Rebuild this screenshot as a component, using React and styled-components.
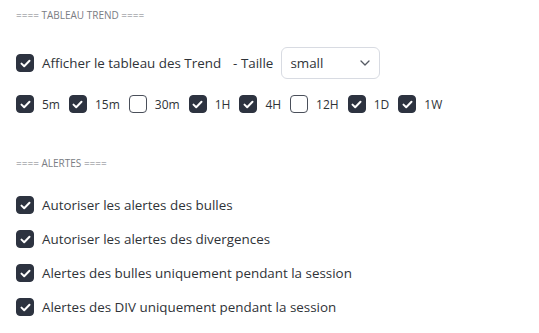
import React from 'react'
import styled, { createGlobalStyle } from 'styled-components'

const Global = createGlobalStyle`
  body {
    margin: 0;
    background: #ffffff;
    font-family: "Open Sans", "Liberation Sans", Arial, sans-serif;
    color: #2f3338;
  }
`

const Page = styled.div`
  padding: 9px 16px;
  display: flex;
  flex-direction: column;
`

const Heading = styled.div`
  font-size: 10px;
  color: #7a7d84;
  height: 12px;
  line-height: 12px;
  margin-bottom: ${p => p.gap}px;
`

const Row = styled.div`
  display: flex;
  align-items: center;
  height: ${p => p.h || 18}px;
  margin-bottom: ${p => p.mb || 0}px;
  font-size: 13.4px;
`

const Box = styled.span`
  width: 18px;
  height: 18px;
  box-sizing: border-box;
  border-radius: 4px;
  flex: none;
  display: flex;
  align-items: center;
  justify-content: center;
  background: ${p => (p.on ? '#2d3340' : '#fff')};
  border: 1px solid ${p => (p.on ? '#2d3340' : '#4a4f5a')};
`

const Label = styled.span`
  margin-left: ${p => p.ml ?? 8}px;
  margin-right: ${p => p.mr || 0}px;
  font-size: ${p => p.fs || 13.4}px;
  white-space: nowrap;
`

const Select = styled.div`
  width: 99px;
  height: 32px;
  box-sizing: border-box;
  border: 1px solid #d8dbe2;
  border-radius: 6px;
  display: flex;
  align-items: center;
  justify-content: space-between;
  padding: 0 9px 0 8px;
  margin-left: 8px;
  font-size: 13.4px;
`

const Check = ({ on }) => (
  <Box on={on ? 1 : 0}>
    {on && (
      <svg width="11" height="9" viewBox="0 0 11 9">
        <path d="M1.5 4.6 L4.2 7.2 L9.5 1.8" fill="none" stroke="#fff" strokeWidth="2" strokeLinecap="round" strokeLinejoin="round" />
      </svg>
    )}
  </Box>
)

const frames = [
  ['5m', true],
  ['15m', true],
  ['30m', false],
  ['1H', true],
  ['4H', true],
  ['12H', false],
  ['1D', true],
  ['1W', true],
]

const alerts = [
  'Autoriser les alertes des bulles',
  'Autoriser les alertes des divergences',
  'Alertes des bulles uniquement pendant la session',
  'Alertes des DIV uniquement pendant la session',
]

export default function App() {
  return (
    <Page>
      <Global />
      <Heading gap={26}>==== TABLEAU TREND ====</Heading>
      <Row h={32} mb={16}>
        <Check on />
        <Label>Afficher le tableau des Trend</Label>
        <Label ml={12}>- Taille</Label>
        <Select>
          <span>small</span>
          <svg width="10" height="6" viewBox="0 0 10 6">
            <path d="M1 1 L5 5 L9 1" fill="none" stroke="#555a63" strokeWidth="1.3" strokeLinecap="round" strokeLinejoin="round" />
          </svg>
        </Select>
      </Row>
      <Row mb={44}>
        {frames.map(([t, on]) => (
          <React.Fragment key={t}>
            <Check on={on} />
            <Label mr={9} fs={12}>{t}</Label>
          </React.Fragment>
        ))}
      </Row>
      <Heading gap={27}>==== ALERTES ====</Heading>
      {alerts.map(a => (
        <Row key={a} mb={16}>
          <Check on />
          <Label>{a}</Label>
        </Row>
      ))}
    </Page>
  )
}
